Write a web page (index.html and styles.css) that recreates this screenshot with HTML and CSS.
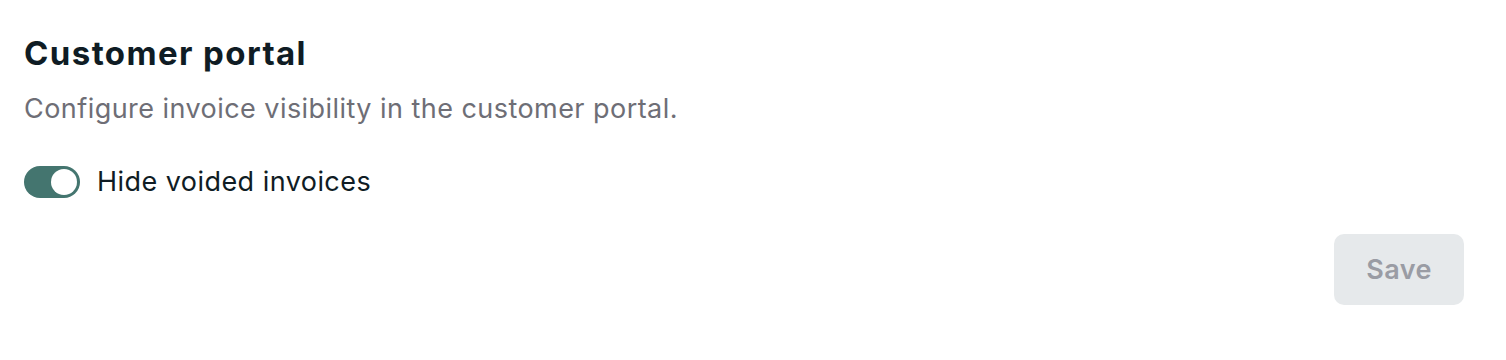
FILE: index.html
```html
<!DOCTYPE html>
<html lang="en">
<head>
<meta charset="utf-8">
<title>Customer portal</title>
<link rel="stylesheet" href="styles.css">
</head>
<body>
<section class="panel">
  <h2 class="title">Customer portal</h2>
  <p class="desc">Configure invoice visibility in the customer portal.</p>
  <label class="toggle-row">
    <span class="switch"><span class="knob"></span></span>
    <span class="toggle-label">Hide voided invoices</span>
  </label>
  <div class="actions">
    <button class="btn-save" type="button" disabled>Save</button>
  </div>
</section>
</body>
</html>
```

FILE: styles.css
```css
* { box-sizing: border-box; }
html, body { margin: 0; padding: 0; background: #ffffff; }
body { font-family: Inter, "Noto Sans", sans-serif; }
.panel {
  padding: 33px 42px 0 24px;
  display: flex;
  flex-direction: column;
}
.title {
  margin: 0;
  font-size: 33px;
  line-height: 40px;
  font-weight: 700;
  color: #0f1c24;
  letter-spacing: 1.4px;
}
.desc {
  margin: 18px 0 0 0;
  font-size: 27px;
  line-height: 36px;
  color: #6e6e76;
  letter-spacing: 0.45px;
}
.toggle-row {
  margin-top: 39px;
  display: flex;
  align-items: center;
  gap: 17px;
}
.switch {
  width: 56px;
  height: 32px;
  border-radius: 16px;
  background: #44756f;
  display: flex;
  align-items: center;
  justify-content: flex-end;
  padding: 0 3px;
}
.knob {
  width: 26px;
  height: 26px;
  border-radius: 50%;
  background: #ffffff;
}
.toggle-label {
  font-size: 27px;
  line-height: 32px;
  color: #0f1c24;
  letter-spacing: 0.45px;
}
.actions {
  margin-top: 36px;
  display: flex;
  justify-content: flex-end;
}
.btn-save {
  width: 130px;
  height: 71px;
  border: none;
  border-radius: 10px;
  background: #e6e9eb;
  color: #9a9ca4;
  font-family: Inter, "Noto Sans", sans-serif;
  font-size: 27px;
  font-weight: 600;
  letter-spacing: 0.45px;
}
```
